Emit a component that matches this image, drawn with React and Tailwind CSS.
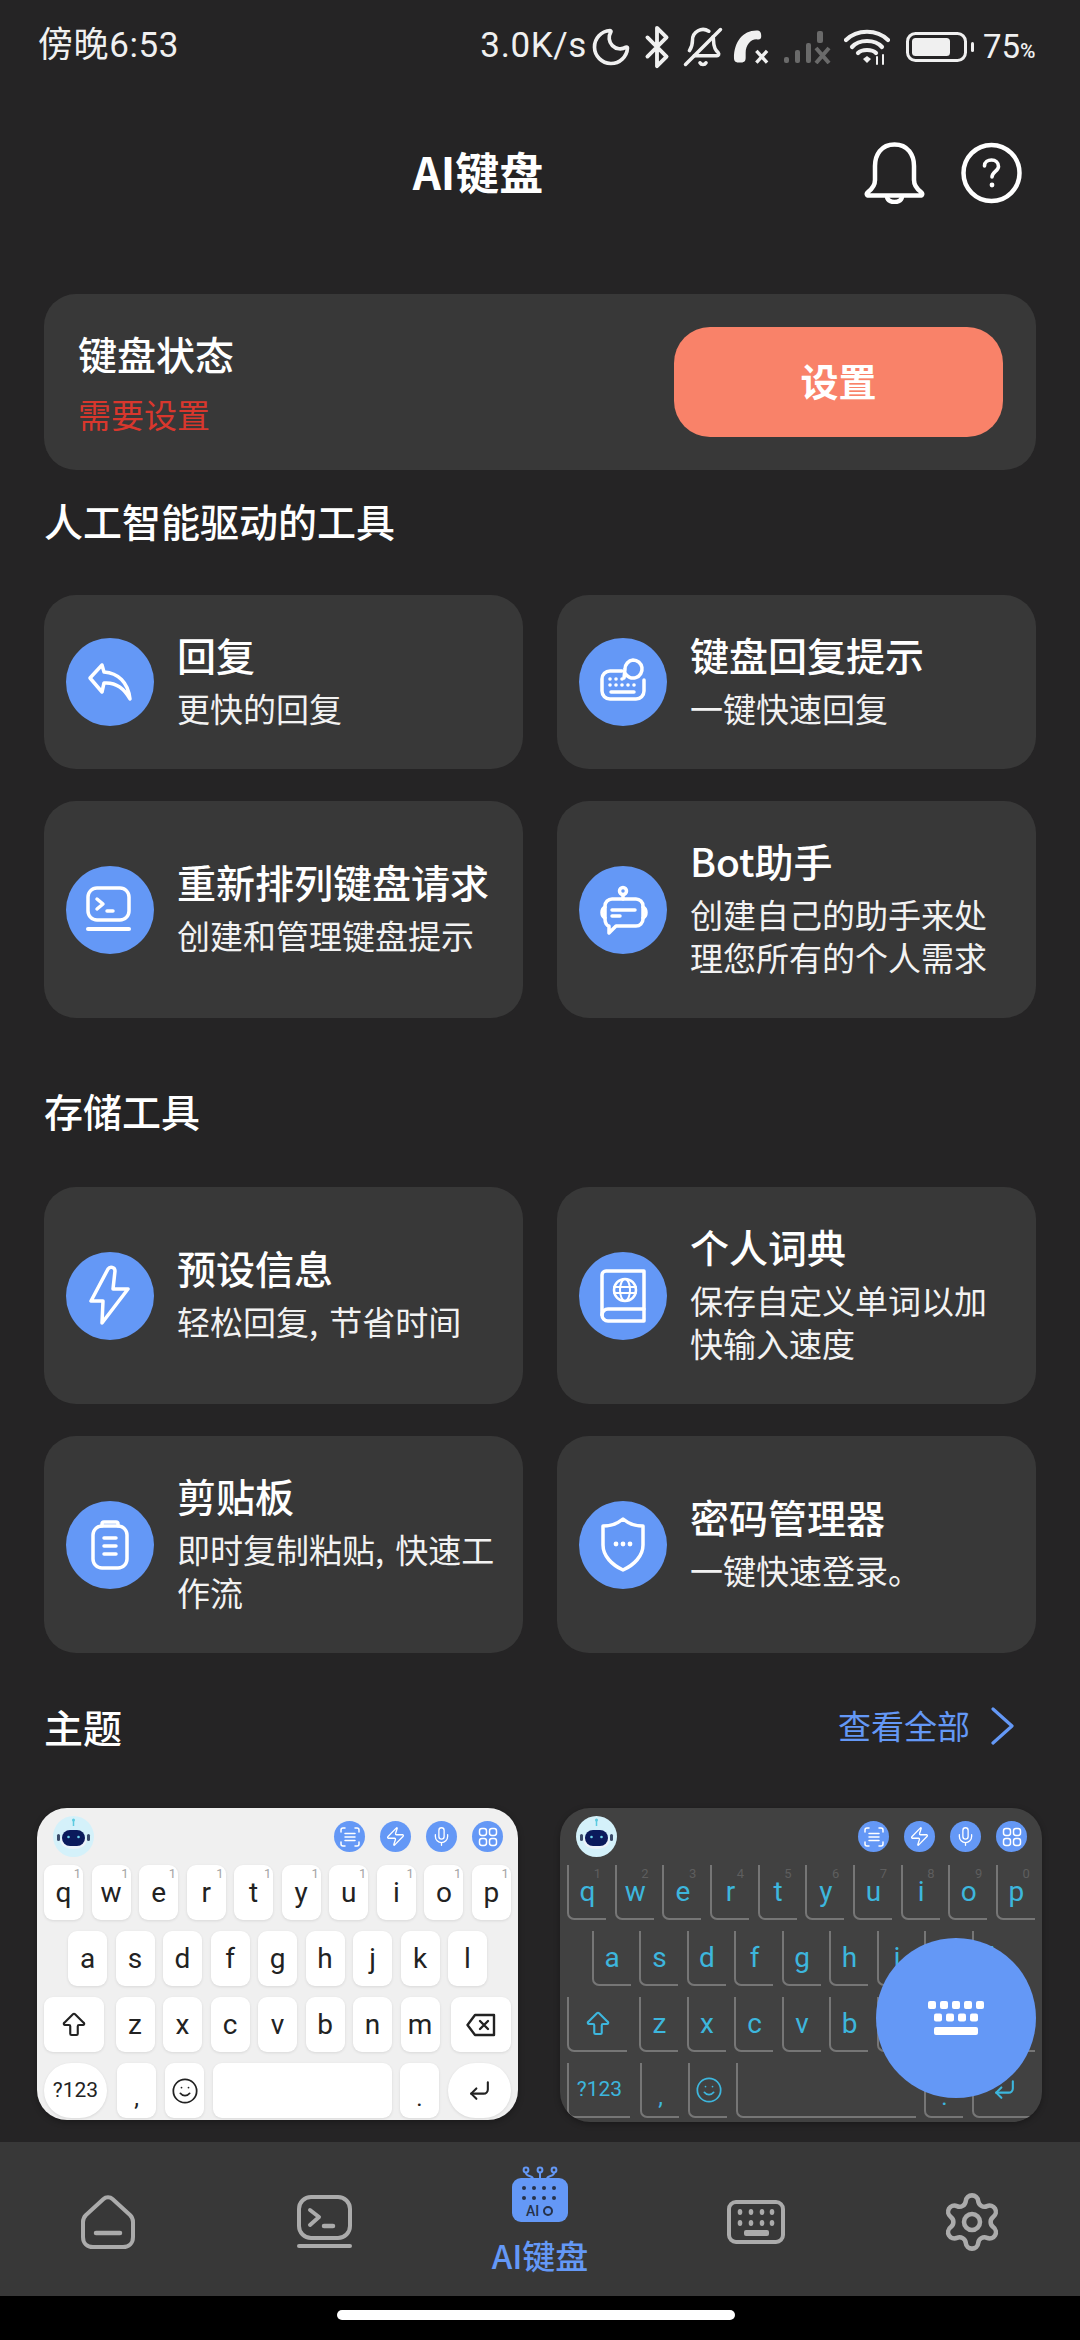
import React from 'react';
import { Bluetooth, BellOff, Moon, Settings, Smile, Zap, Mic, CornerDownLeft, ArrowBigUp } from 'lucide-react';

const cjk = { fontFamily: '"Noto Sans CJK SC", sans-serif' };

function Sv({ children, size = 88, vb = '0 0 88 88', sw = 3.5, cls = '' }) {
  return (
    <svg width={size} height={size} viewBox={vb} fill="none" stroke="currentColor" strokeWidth={sw} strokeLinecap="round" strokeLinejoin="round" className={cls}>
      {children}
    </svg>
  );
}

const icons = {
  reply: (
    <Sv><path d="M36 27 L24 40 L36 54 L38 45 C50 44 58 50 64 61 C62 44 52 35 38 34 Z" /></Sv>
  ),
  kbBubble: (
    <Sv>
      <path d="M43 33 H31 a8 8 0 0 0 -8 8 V53 a8 8 0 0 0 8 8 H57 a8 8 0 0 0 8 -8 V42" />
      <path d="M54 22 a9 9 0 1 1 -8 13 L45 40 L46 31 a9 9 0 0 1 8 -9 Z" />
      <g stroke="none" fill="currentColor">
        <circle cx="31" cy="41" r="1.8" /><circle cx="37" cy="41" r="1.8" /><circle cx="43" cy="41" r="1.8" />
        <circle cx="31" cy="47" r="1.8" /><circle cx="37" cy="47" r="1.8" /><circle cx="43" cy="47" r="1.8" /><circle cx="49" cy="47" r="1.8" /><circle cx="55" cy="47" r="1.8" />
      </g>
      <path d="M32 54 H55" />
    </Sv>
  ),
  terminal: (
    <Sv>
      <rect x="22" y="22" width="41" height="32" rx="9" />
      <path d="M31 33 L37 38 L31 43" /><path d="M41 45 H47" /><path d="M22 63 H63" strokeWidth="4" />
    </Sv>
  ),
  bot: (
    <Sv>
      <circle cx="44" cy="25" r="3.5" /><path d="M44 29 V33" />
      <path d="M33 33 H57 a7 7 0 0 1 7 7 V53 a7 7 0 0 1 -7 7 H37 L30 67 V60 a4 7 0 0 1 -4 -7 V40 a7 7 0 0 1 7 -7 Z" />
      <path d="M26 41 a5 6 0 0 0 0 11" /><path d="M64 41 a5 6 0 0 1 0 11" />
      <path d="M33 44 H56" /><path d="M33 50 H41" />
    </Sv>
  ),
  bolt: (
    <Sv><path d="M42 17 L25 49 H37 L36 71 L62 37 H47 L49 19 C49 15 44 14 42 17 Z" /></Sv>
  ),
  book: (
    <Sv>
      <path d="M27 19 H65 V69 H29 a6 6 0 0 1 -6 -6 V23 a4 4 0 0 1 4 -4 Z" />
      <path d="M23 63 a6 6 0 0 1 6 -6 H65" />
      <circle cx="46" cy="38" r="11" strokeWidth="2.5" />
      <ellipse cx="46" cy="38" rx="5" ry="11" strokeWidth="2" />
      <path d="M35 35 H57 M35 41 H57" strokeWidth="2" />
    </Sv>
  ),
  clip: (
    <Sv>
      <rect x="27" y="25" width="34" height="42" rx="9" />
      <path d="M36 25 V23 a2 2 0 0 1 2 -2 H50 a2 2 0 0 1 2 2 V25" />
      <path d="M38 37 H50 M38 45 H50 M38 53 H50" />
    </Sv>
  ),
  shield: (
    <Sv>
      <path d="M44 18 C50 23 57 25 64 25 V44 C64 55 55 64 44 69 C33 64 24 55 24 44 V25 C31 25 38 23 44 18 Z" />
      <g stroke="none" fill="currentColor"><circle cx="37" cy="43" r="2.4" /><circle cx="44" cy="43" r="2.4" /><circle cx="51" cy="43" r="2.4" /></g>
    </Sv>
  ),
};

function Card({ icon, title, sub }) {
  return (
    <div className="flex items-center gap-[23px] rounded-[32px] bg-[#383838] pl-[22px] pr-[26px] py-[33.5px]">
      <div className="flex h-[88px] w-[88px] shrink-0 items-center justify-center rounded-full bg-[#6498f6] text-white">{icons[icon]}</div>
      <div className="min-w-0 flex-1 pb-[6px] text-white">
        <div className="text-[39px] font-medium leading-[50px]">{title}</div>
        <div className="mt-2 text-[33px] leading-[43px] text-[#f2f2f2]">{sub}</div>
      </div>
    </div>
  );
}

function Robot() {
  return (
    <svg width="41" height="41" viewBox="0 0 41 41">
      <circle cx="20.5" cy="20.5" r="20.5" fill="#d4f1fa" />
      <path d="M20.5 4 V10" stroke="#5ccbe0" strokeWidth="1.5" />
      <circle cx="20.5" cy="4" r="1.5" fill="#5ccbe0" />
      <ellipse cx="20.5" cy="25" rx="13" ry="8" fill="#ecf3fa" />
      <rect x="9" y="14" width="23" height="16" rx="8" fill="#0b1a5c" />
      <circle cx="15.5" cy="21" r="1.3" fill="#6ad1e8" /><circle cx="25.5" cy="21" r="1.3" fill="#6ad1e8" />
      <rect x="4" y="18" width="3" height="7" rx="1.5" fill="#3a4a6a" /><rect x="34" y="18" width="3" height="7" rx="1.5" fill="#3a4a6a" />
    </svg>
  );
}

function TopIcons() {
  const c = 'flex h-[31px] w-[31px] items-center justify-center rounded-full bg-[#6498f6] text-white';
  return (
    <div className="flex gap-[15px]">
      <div className={c}>
        <svg width="20" height="20" viewBox="0 0 20 20" fill="none" stroke="currentColor" strokeWidth="1.5" strokeLinecap="round">
          <path d="M1 5 V3 a2 2 0 0 1 2 -2 H5 M15 1 H17 a2 2 0 0 1 2 2 V5 M1 15 V17 a2 2 0 0 0 2 2 H5 M15 19 H17 a2 2 0 0 0 2 -2 V15 M5 6.5 H15 M5 10 H15 M5 13.5 H15" />
        </svg>
      </div>
      <div className={c}><Zap size={21} strokeWidth={1.5} /></div>
      <div className={c}><Mic size={21} strokeWidth={1.5} /></div>
      <div className={c}>
        <svg width="20" height="20" viewBox="0 0 20 20" fill="none" stroke="currentColor" strokeWidth="1.5">
          <rect x="1.5" y="1.5" width="7" height="7" rx="2.4" /><rect x="11.5" y="1.5" width="7" height="7" rx="2.4" /><rect x="1.5" y="11.5" width="7" height="7" rx="2.4" /><rect x="11.5" y="11.5" width="7" height="7" rx="2.4" />
        </svg>
      </div>
    </div>
  );
}

function Keyboard({ dark }) {
  const key = dark
    ? 'relative flex items-center justify-center border-l-2 border-b-2 border-[#767676] rounded-bl-[7px] text-[#3db6dd]'
    : 'relative flex items-center justify-center rounded-[9px] bg-white shadow-[0_1px_3px_rgba(0,0,0,0.1)] text-[#222222]';
  const r1 = ['q', 'w', 'e', 'r', 't', 'y', 'u', 'i', 'o', 'p'];
  const r2 = ['a', 's', 'd', 'f', 'g', 'h', 'j', 'k', 'l'];
  const r3 = ['z', 'x', 'c', 'v', 'b', 'n', 'm'];
  const nums = ['1', '2', '3', '4', '5', '6', '7', '8', '9', '0'];
  const fam = { fontFamily: 'Roboto, sans-serif' };
  return (
    <div style={fam} className={dark ? 'h-[314px] w-[482px] overflow-hidden rounded-[30px] bg-[#414141] shadow-[0_2px_6px_rgba(0,0,0,0.3)]' : 'h-[312px] w-[481px] overflow-hidden rounded-[30px] bg-[#f0f0f0] shadow-[0_2px_6px_rgba(0,0,0,0.3)]'}>
      <div className="flex h-[57px] items-center justify-between pl-[16px] pr-[15px]">
        <Robot />
        <TopIcons />
      </div>
      <div className="flex flex-col gap-[11px] px-[7px] text-[28px] leading-none">
        <div className="flex h-[55px] justify-between">
          {r1.map((l, i) => (
            <div key={l} className={key + ' w-[39px]'}>
              <span className={dark ? 'absolute right-[5px] top-[2px] text-[13px] text-[#5e5e5e]' : 'absolute right-[2px] top-[2px] text-[13px] text-[#a5a5a5]'}>{dark ? nums[i] : '1'}</span>
              {l}
            </div>
          ))}
        </div>
        <div className="flex h-[55px] justify-center gap-[8.5px]">
          {r2.map((l) => <div key={l} className={key + ' w-[39px]'}>{l}</div>)}
        </div>
        <div className="flex h-[55px] justify-between">
          <div className={key + ' w-[60px]'}><ArrowBigUp size={30} strokeWidth={1.7} /></div>
          <div className="flex gap-[8.5px]">
            {r3.map((l) => <div key={l} className={key + ' w-[39px]'}>{l}</div>)}
          </div>
          <div className={key + ' w-[60px]'}>
            <svg width="30" height="24" viewBox="0 0 30 24" fill="none" stroke="currentColor" strokeWidth="2.4" strokeLinejoin="round" strokeLinecap="round"><path d="M9 2 H28 V22 H9 L1.5 12 Z" /><path d="M14 8 L22 16 M22 8 L14 16" /></svg>
          </div>
        </div>
        <div className="flex h-[55px] justify-between text-[21px]">
          <div className={key + (dark ? ' w-[63px]' : ' w-[63px] rounded-[28px]')}>?123</div>
          <div className={key + ' ml-[10px] w-[39px] pt-[14px] text-[24px]'}>,</div>
          <div className={key + ' ml-[9px] w-[39px]'}><Smile size={28} strokeWidth={1.5} /></div>
          <div className={key + ' ml-[9px] flex-1'} />
          <div className={key + ' ml-[8px] w-[39px] pt-[14px] text-[24px]'}>.</div>
          <div className={key + (dark ? ' ml-[9px] w-[63px]' : ' ml-[9px] w-[63px] rounded-[28px]')}><CornerDownLeft size={25} strokeWidth={2} /></div>
        </div>
      </div>
    </div>
  );
}

function NavHome() {
  return (
    <svg width="54" height="54" viewBox="0 0 54 54" fill="none" stroke="currentColor" strokeWidth="4" strokeLinejoin="round" strokeLinecap="round">
      <path d="M22.5 4 C25 1.5 29 1.5 31.5 4 L49 20 C51 22 52 24 52 27 V42 C52 48 48 52 42 52 H12 C6 52 2 48 2 42 V27 C2 24 3 22 5 20 Z" />
      <path d="M15 38 H39" strokeWidth="4.5" />
    </svg>
  );
}

function NavTerminal() {
  return (
    <svg width="55" height="53" viewBox="0 0 55 53" fill="none" stroke="currentColor" strokeWidth="4" strokeLinejoin="round" strokeLinecap="round">
      <rect x="2" y="2" width="51" height="41" rx="12" />
      <path d="M13 15 L22 22 L13 30" /><path d="M27 31 H36" strokeWidth="4.5" /><path d="M2 51 H53" strokeWidth="4" />
    </svg>
  );
}

function NavAi() {
  return (
    <svg width="56" height="56" viewBox="0 0 56 56">
      <g fill="none" stroke="#6498f6" strokeWidth="2">
        <circle cx="14" cy="4" r="2.4" /><circle cx="28" cy="4" r="2.4" /><circle cx="42" cy="4" r="2.4" />
        <path d="M14 7 C14 11 21 9 21 13 V15 M28 7 V15 M42 7 C42 11 35 9 35 13 V15" />
      </g>
      <rect x="0" y="12" width="56" height="44" rx="9" fill="#6498f6" />
      <g fill="#26324a">
        {[12, 22, 32, 42].map((x) => <circle key={x} cx={x} cy="22" r="2" />)}
        {[12, 22, 32, 42].map((x) => <circle key={x} cx={x} cy="32" r="2" />)}
      </g>
      <text x="14" y="50" fontSize="14" fontWeight="500" fill="#26324a" fontFamily="Roboto, sans-serif">AI</text>
      <circle cx="36" cy="45" r="4" fill="none" stroke="#26324a" strokeWidth="2" />
    </svg>
  );
}

function NavKeyboard() {
  return (
    <svg width="58" height="44" viewBox="0 0 58 44" fill="none" stroke="currentColor" strokeWidth="4">
      <rect x="2" y="2" width="54" height="40" rx="7" />
      <g stroke="none" fill="currentColor">
        {[13, 24, 35, 45].map((x) => <ellipse key={x} cx={x} cy="12" rx="2.3" ry="3" />)}
        {[13, 24, 35, 45].map((x) => <ellipse key={x} cx={x} cy="23" rx="2.3" ry="3" />)}
        <rect x="17" y="30" width="25" height="6" rx="2" />
      </g>
    </svg>
  );
}

function StatusIcons() {
  return (
    <div className="flex items-center text-[#f0f0f0]">
      <div className="ml-[5px] flex w-[38px] justify-center"><Moon size={44} strokeWidth={2} className="shrink-0" /></div>
      <div className="ml-[14px] flex w-[25px] justify-center"><Bluetooth size={46} strokeWidth={2} className="shrink-0" /></div>
      <div className="ml-[16px] flex w-[35px] justify-center"><BellOff size={42} strokeWidth={2} className="shrink-0 -scale-x-100" /></div>
      <svg width="37" height="34" viewBox="0 0 38 34" className="ml-[13px]" fill="currentColor">
        <path d="M24 0 C28 0 29 2 29 6 C29 9 27 10 24 9 C18 9 13 15 13 23 V28 C13 32 11 33 7 33 C3 33 1 32 1 28 C1 12 10 0 24 0 Z" />
        <path d="M24 21 L35 33 M35 21 L24 33" stroke="currentColor" strokeWidth="3.5" fill="none" />
      </svg>
      <svg width="48" height="34" viewBox="0 0 48 34" className="ml-[13px]" fill="#6a6a6a">
        <rect x="1" y="27" width="5" height="6" rx="2" /><rect x="12" y="20" width="5" height="13" rx="2" /><rect x="23" y="13" width="5" height="20" rx="2" /><rect x="34" y="1" width="6" height="12" rx="2" />
        <path d="M33 18 L46 33 M46 18 L33 33" stroke="#6a6a6a" strokeWidth="4" fill="none" />
      </svg>
      <svg width="46" height="36" viewBox="0 0 46 36" className="ml-[13px]" fill="none" stroke="currentColor" strokeWidth="4.2" strokeLinecap="round">
        <path d="M2 11 C13 0 33 0 44 11" /><path d="M8 18 C15 10 31 10 38 18" /><path d="M14 24 C18 20 28 20 32 24" />
        <path d="M19 30 L23 34 L27 30 L23 27 Z" fill="currentColor" stroke="none" />
        <path d="M33 28 V35 M39 26 V35" strokeWidth="2" />
      </svg>
      <svg width="69" height="30" viewBox="0 0 69 30" className="ml-[16px]" fill="none">
        <rect x="1.5" y="1.5" width="58" height="27" rx="8" stroke="currentColor" strokeWidth="3" />
        <rect x="6" y="6" width="38" height="18" rx="3.5" fill="currentColor" />
        <rect x="65" y="10" width="3" height="10" rx="1.5" fill="currentColor" />
      </svg>
      <span className="ml-[8px] w-[53px] text-[33px] leading-none tracking-normal">75<span className="text-[21px] font-medium">%</span></span>
    </div>
  );
}

export default function App() {
  return (
    <div style={cjk} className="relative flex h-[2340px] w-[1080px] flex-col overflow-hidden bg-[#252425] text-white">
      <div style={{ fontFamily: 'Roboto, "Noto Sans CJK SC", sans-serif' }} className="flex h-[92px] items-center justify-between pl-[38px] pr-[44px] pt-[1px] text-[35px] tracking-[0.6px] text-[#f0f0f0]">
        <span>傍晚6:53</span>
        <div className="flex items-center">
          <span>3.0K/s</span>
          <StatusIcons />
        </div>
      </div>

      <div className="flex h-[162px] items-center pl-[92px] pr-[58px]">
        <div className="flex-1 pb-[5px] text-center text-[44px] font-bold">AI键盘</div>
        <div className="flex items-center gap-[36px]">
          <svg width="61" height="62" viewBox="0 0 61 62" fill="none" stroke="white" strokeWidth="4.5" strokeLinejoin="round">
            <path d="M30.5 2.5 C17 2.5 11 13 11 24 V38 C11 44 8 47 4 50 C2 51.5 2.5 53.5 5 53.5 H56 C58.5 53.5 59 51.5 57 50 C53 47 50 44 50 38 V24 C50 13 44 2.5 30.5 2.5 Z" />
            <path d="M23 54 C23 58 26 60 30.5 60 C35 60 38 58 38 54" />
          </svg>
          <svg width="61" height="62" viewBox="0 0 61 62" fill="none" stroke="white" strokeWidth="4.5" strokeLinecap="round">
            <circle cx="30.5" cy="31" r="28" />
            <path d="M23.5 24 C23.5 20 27 18 30.5 18 C34.5 18 37.5 20.5 37.5 24.5 C37.5 29 31 30 31 35" strokeWidth="3.6" />
            <circle cx="31" cy="43" r="2.4" fill="white" stroke="none" />
          </svg>
        </div>
      </div>

      <div className="mx-[44px] mt-[40px] flex h-[176px] items-center justify-between rounded-[32px] bg-[#383838] pl-[34px] pr-[33px]">
        <div>
          <div className="text-[39px] font-medium leading-[50px]">键盘状态</div>
          <div className="mt-[15px] text-[33px] leading-[43px] text-[#d9372d]">需要设置</div>
        </div>
        <div className="flex h-[110px] w-[329px] items-center justify-center rounded-[36px] bg-[#f98269] pb-[5px] text-[38px] font-bold">设置</div>
      </div>

      <div className="mt-[24px] h-[52px] pl-[44px] text-[39px] font-medium leading-[52px]">人工智能驱动的工具</div>
      <div className="mx-[44px] mt-[49px] grid grid-cols-2 gap-x-[34px] gap-y-[32px]">
        <Card icon="reply" title="回复" sub="更快的回复" />
        <Card icon="kbBubble" title="键盘回复提示" sub="一键快速回复" />
        <Card icon="terminal" title="重新排列键盘请求" sub="创建和管理键盘提示" />
        <Card icon="bot" title="Bot助手" sub="创建自己的助手来处理您所有的个人需求" />
      </div>

      <div className="mt-[66px] h-[52px] pl-[44px] text-[39px] font-medium leading-[52px]">存储工具</div>
      <div className="mx-[44px] mt-[51px] grid grid-cols-2 gap-x-[34px] gap-y-[32px]">
        <Card icon="bolt" title="预设信息" sub="轻松回复,&#8196;节省时间" />
        <Card icon="book" title="个人词典" sub="保存自定义单词以加快输入速度" />
        <Card icon="clip" title="剪贴板" sub="即时复制粘贴,&#8196;快速工作流" />
        <Card icon="shield" title="密码管理器" sub="一键快速登录。" />
      </div>

      <div className="mt-[47px] flex h-[52px] items-center justify-between pl-[44px] pr-[65px]">
        <span className="text-[39px] font-medium">主题</span>
        <div className="flex items-center gap-[20px] text-[#6498f6]">
          <span className="text-[33px]">查看全部</span>
          <svg width="25" height="38" viewBox="0 0 25 38" fill="none" stroke="currentColor" strokeWidth="3.2" strokeLinecap="round" strokeLinejoin="round"><path d="M3 2 L22 19 L3 36" /></svg>
        </div>
      </div>

      <div className="mt-[56px] flex justify-between pl-[37px] pr-[38px]">
        <Keyboard />
        <Keyboard dark />
      </div>

      <div className="absolute left-[876px] top-[1938px] flex h-[160px] w-[160px] items-center justify-center rounded-full bg-[#6498f6]">
        <svg width="56" height="34" viewBox="0 0 56 34" fill="white">
          {[0, 12, 24, 36, 48].map((x) => <rect key={x} x={x} y="0" width="8" height="8" rx="2" />)}
          {[6, 18, 30, 42].map((x) => <rect key={x} x={x} y="12.5" width="8" height="8" rx="2" />)}
          <rect x="6" y="26" width="44" height="8" rx="2" />
        </svg>
      </div>

      <div className="absolute bottom-[44px] left-0 right-0 grid h-[154px] grid-cols-5 bg-[#383838] text-[#ababab]">
        <div className="flex items-center justify-center pt-[5px]"><NavHome /></div>
        <div className="flex items-center justify-center pt-[5px]"><NavTerminal /></div>
        <div className="flex flex-col items-center pt-[24px] text-[#6498f6]">
          <NavAi />
          <span className="mt-[15px] text-[33px] font-medium leading-[36px]">AI键盘</span>
        </div>
        <div className="flex items-center justify-center pt-[5px]"><NavKeyboard /></div>
        <div className="flex items-center justify-center pt-[5px]"><Settings size={64} strokeWidth={1.7} /></div>
      </div>

      <div className="absolute bottom-0 left-0 right-0 flex h-[44px] justify-center bg-black pr-[8px] pt-[14px]">
        <div className="h-[10px] w-[398px] rounded-full bg-white" />
      </div>
    </div>
  );
}
